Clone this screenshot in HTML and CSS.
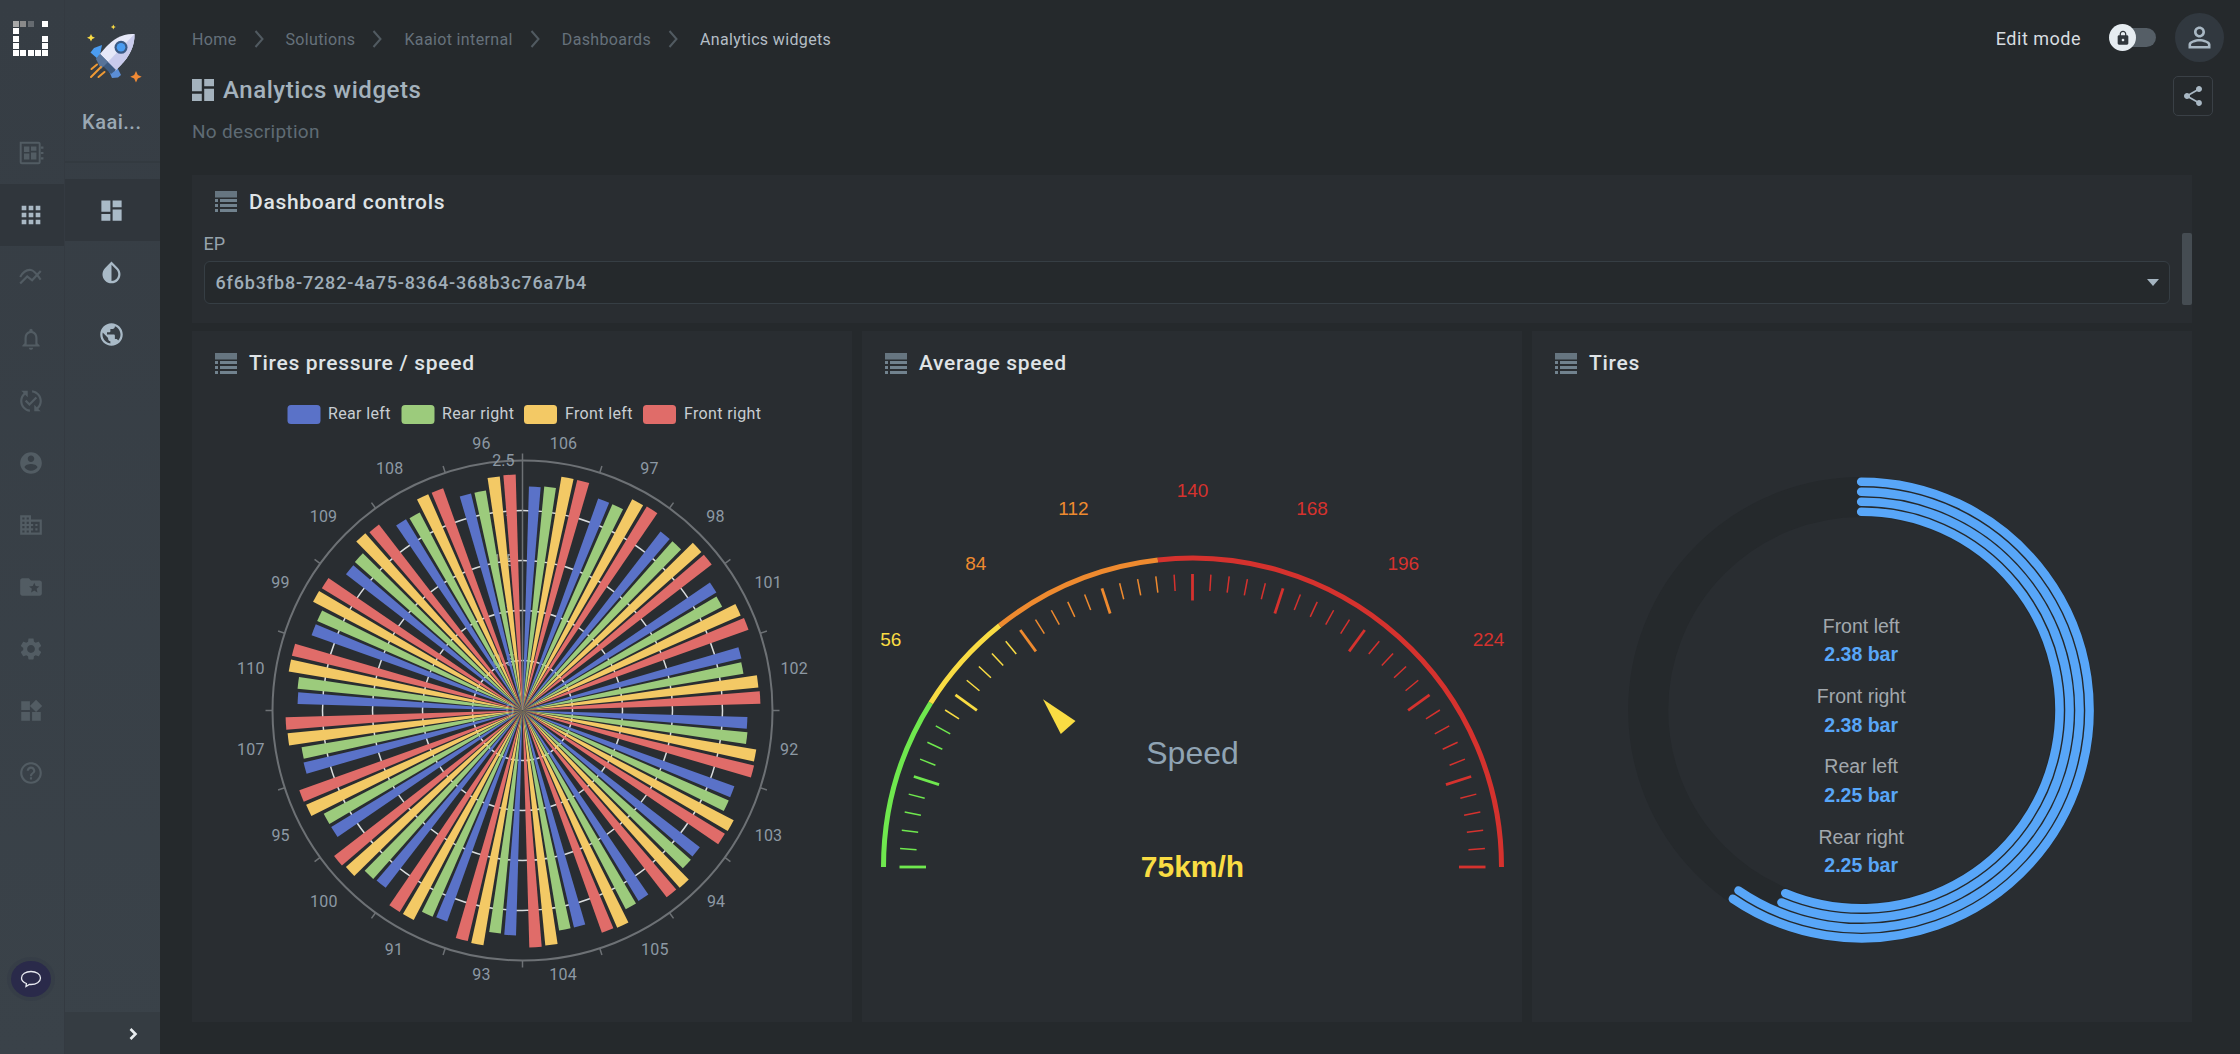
FILE: index.html
```html
<!DOCTYPE html>
<html lang="en">
<head>
<meta charset="utf-8">
<title>Analytics widgets</title>
<link rel="stylesheet" href="styles.css">
</head>
<body>
<div class="app">
  <nav class="rail">
    <div class="logo">
      <div class="logo-grid">
        <i class="g1"></i><i class="g2"></i><i class="g3"></i><b></b><i></i>
        <i></i><b></b><b></b><b></b><b></b>
        <i></i><b></b><b></b><b></b><i></i>
        <i></i><b></b><b></b><b></b><i></i>
        <i></i><i></i><i></i><i></i><i></i>
      </div>
    </div>
    <a class="rail-item"><svg class="ic" viewBox="0 0 24 24"><path fill="none" stroke="currentColor" stroke-width="1.8" d="M2.5 2.5h16.5a1 1 0 0 1 1 1v17a1 1 0 0 1-1 1H3.500a1 1 0 0 1-1-1z"/><path d="M5.500 6h5v5h-5zM12 6h5v4h-5zM12 11.500h5V18h-5zM5.500 12.500h5V18h-5zM21 6h2.500v2H21zM21 11h2.500v2H21zM21 16h2.500v2H21z"/></svg></a>
    <a class="rail-item active"><svg class="ic" viewBox="0 0 24 24"><path d="M4 8h4V4H4v4zm6 12h4v-4h-4v4zm-6 0h4v-4H4v4zm0-6h4v-4H4v4zm6 0h4v-4h-4v4zm6-10v4h4V4h-4zm-6 4h4V4h-4v4zm6 6h4v-4h-4v4zm0 6h4v-4h-4v4z"/></svg></a>
    <a class="rail-item"><svg class="ic" viewBox="0 0 24 24"><path fill="none" stroke="currentColor" stroke-width="2" d="M2 18l6.500-6.500 4.500 3.500 8-8.500M2 12c2.500-4.500 6.500-7 10-6.500 3.500.5 6 5 9 9"/></svg></a>
    <a class="rail-item"><svg class="ic" viewBox="0 0 24 24"><path d="M12 22c1.100 0 2-.9 2-2h-4c0 1.100.9 2 2 2zm6-6v-5c0-3.070-1.630-5.640-4.500-6.320V4c0-.83-.67-1.500-1.500-1.500s-1.500.67-1.500 1.500v.68C7.640 5.360 6 7.920 6 11v5l-2 2v1h16v-1l-2-2zm-2 1H8v-6c0-2.480 1.510-4.500 4-4.500s4 2.020 4 4.500v6z"/></svg></a>
    <a class="rail-item"><svg class="ic" viewBox="0 0 24 24"><path d="M17.660 9.530l-7.070 7.070-4.240-4.240 1.410-1.410 2.830 2.830 5.660-5.660zM4 12c0-2.330 1.020-4.420 2.620-5.880L9 8.500v-6H3l2.200 2.200C3.240 6.520 2 9.110 2 12c0 5.190 3.950 9.450 9 9.950v-2.020C7.060 19.440 4 16.070 4 12zm18 0c0-5.190-3.950-9.450-9-9.950v2.020c3.940.49 7 3.860 7 7.930 0 2.330-1.020 4.420-2.620 5.880L15 15.500v6h6l-2.200-2.200C20.760 17.480 22 14.890 22 12z"/></svg></a>
    <a class="rail-item"><svg class="ic" viewBox="0 0 24 24"><path d="M12 2C6.480 2 2 6.480 2 12s4.480 10 10 10 10-4.480 10-10S17.520 2 12 2zm0 3c1.660 0 3 1.340 3 3s-1.340 3-3 3-3-1.340-3-3 1.340-3 3-3zm0 14.200c-2.500 0-4.710-1.280-6-3.220.03-1.990 4-3.080 6-3.080 1.990 0 5.970 1.090 6 3.080-1.290 1.940-3.500 3.220-6 3.220z"/></svg></a>
    <a class="rail-item"><svg class="ic" viewBox="0 0 24 24"><path d="M12 7V3H2v18h20V7H12zM6 19H4v-2h2v2zm0-4H4v-2h2v2zm0-4H4V9h2v2zm0-4H4V5h2v2zm4 12H8v-2h2v2zm0-4H8v-2h2v2zm0-4H8V9h2v2zm0-4H8V5h2v2zm10 12h-8v-2h2v-2h-2v-2h2v-2h-2V9h8v10zm-2-8h-2v2h2v-2zm0 4h-2v2h2v-2z"/></svg></a>
    <a class="rail-item"><svg class="ic" viewBox="0 0 24 24"><path d="M20 6h-8l-2-2H4c-1.100 0-1.990.9-1.990 2L2 18c0 1.100.9 2 2 2h16c1.100 0 2-.9 2-2V8c0-1.100-.9-2-2-2zm-2.060 11L15 15.280 12.060 17l.78-3.330-2.590-2.240 3.410-.29L15 8l1.340 3.140 3.410.29-2.590 2.240.78 3.330z"/></svg></a>
    <a class="rail-item"><svg class="ic" viewBox="0 0 24 24"><path d="M19.140 12.940c.04-.3.060-.61.060-.94 0-.32-.02-.64-.07-.94l2.030-1.580c.18-.14.23-.41.12-.61l-1.920-3.320c-.12-.22-.37-.29-.59-.22l-2.390.96c-.5-.38-1.030-.7-1.620-.94l-.36-2.540c-.04-.24-.24-.41-.48-.41h-3.840c-.24 0-.43.17-.47.41l-.36 2.540c-.59.24-1.130.57-1.620.94l-2.390-.96c-.22-.08-.47 0-.59.22L2.740 8.870c-.12.21-.08.47.12.61l2.030 1.580c-.05.3-.09.63-.09.94s.02.64.07.94l-2.030 1.580c-.18.14-.23.41-.12.61l1.920 3.320c.12.22.37.29.59.22l2.390-.96c.5.38 1.030.7 1.620.94l.36 2.540c.05.24.24.41.48.41h3.840c.24 0 .44-.17.47-.41l.36-2.540c.59-.24 1.130-.56 1.620-.94l2.390.96c.22.08.47 0 .59-.22l1.920-3.320c.12-.22.07-.47-.12-.61l-2.010-1.580zM12 15.600c-1.980 0-3.600-1.620-3.600-3.600s1.620-3.600 3.600-3.600 3.600 1.620 3.600 3.600-1.620 3.600-3.600 3.600z"/></svg></a>
    <a class="rail-item"><svg class="ic" viewBox="0 0 24 24"><path d="M13 13v8h8v-8h-8zM3 21h8v-8H3v8zM3 3v8h8V3H3zm13.660-1.310L11 7.340 16.660 13l5.660-5.660-5.660-5.650z"/></svg></a>
    <a class="rail-item"><svg class="ic" viewBox="0 0 24 24"><path d="M11 18h2v-2h-2v2zm1-16C6.480 2 2 6.480 2 12s4.480 10 10 10 10-4.480 10-10S17.520 2 12 2zm0 18c-4.410 0-8-3.590-8-8s3.590-8 8-8 8 3.590 8 8-3.590 8-8 8zm0-14c-2.210 0-4 1.790-4 4h2c0-1.100.9-2 2-2s2 .9 2 2c0 2-3 1.750-3 5h2c0-2.250 3-2.500 3-5 0-2.210-1.790-4-4-4z"/></svg></a>
    <button class="chat"><svg viewBox="0 0 24 24"><path fill="none" stroke="currentColor" stroke-width="1.300" d="M12 4.500c5.200 0 9.500 2.700 9.500 6.500s-4.300 6.500-9.500 6.500c-.6 0-1.200 0-1.700-.1L7 19.500l.4-3C4.400 15.400 2.500 13.400 2.500 11c0-3.800 4.300-6.500 9.500-6.500z"/></svg></button>
  </nav>

  <aside class="side">
    <div class="side-head">
      <svg class="rocket" viewBox="0 0 80 75">
        <path fill="#4b9cf0" d="M31 30l-8 3-3.500 4.500L28 45z"/>
        <path fill="#5b8ed6" d="M46 52l4 8-3 2.500-6 .5-3.500-8z"/>
        <path fill="#e6e8f8" d="M63.500 19C52 18 42 24 35 32l-7 8 16 16 6-6c8-8 14-19 13.500-31z"/>
        <path fill="#c9cbec" d="M63.500 19L36 48l8 8 6-6c8-8 14-19 13.500-31z"/>
        <path fill="#3d5a80" d="M29 39l16 16-5 4-15-15z"/>
        <path fill="#577399" d="M29 39l8 8-7 7-5-10z"/>
        <circle cx="50" cy="32.300" r="6.500" fill="#3a5a85"/>
        <circle cx="50" cy="32.300" r="4.300" fill="#4b9cf0"/>
        <path fill="none" stroke="#ef9a35" stroke-width="2" stroke-linecap="round" d="M20.500 54l5.500-4.500M20 62l10-10M27.500 62l6-5"/>
        <path fill="#fbdc45" d="M20 19l1.200 2.500L24 22.700l-2.800 1.200L20 26.500l-1.200-2.600-2.800-1.200 2.800-1.200zM42.300 9.500l.8 1.700 1.700.8-1.700.8-.8 1.700-.8-1.700-1.700-.8 1.700-.8z"/>
        <path fill="#f08a35" d="M65 56l1.800 3.900 3.900 1.800-3.900 1.800L65 67.500l-1.800-4-3.900-1.800 3.900-1.800z"/>
      </svg>
      <div class="side-name">Kaai...</div>
    </div>
    <a class="side-item active"><svg class="ic" viewBox="0 0 24 24"><path d="M3 13h8V3H3v10zm0 8h8v-6H3v6zm10 0h8V11h-8v10zm0-18v6h8V3h-8z"/></svg></a>
    <a class="side-item"><svg class="ic flip" viewBox="0 0 24 24"><path d="M17.660 7.930L12 2.270 6.340 7.930c-3.120 3.120-3.120 8.190 0 11.310C7.900 20.800 9.950 21.580 12 21.580c2.050 0 4.100-.78 5.660-2.340 3.120-3.120 3.120-8.190 0-11.310zM12 19.590c-1.600 0-3.110-.62-4.240-1.760C6.620 16.690 6 15.190 6 13.590s.62-3.110 1.760-4.240L12 5.100v14.490z"/></svg></a>
    <a class="side-item"><svg class="ic" viewBox="0 0 24 24"><path d="M12 2C6.480 2 2 6.480 2 12s4.480 10 10 10 10-4.480 10-10S17.520 2 12 2zm-1 17.930c-3.950-.49-7-3.850-7-7.930 0-.62.08-1.210.21-1.790L9 15v1c0 1.100.9 2 2 2v1.930zm6.900-2.540c-.26-.81-1-1.390-1.900-1.390h-1v-3c0-.55-.45-1-1-1H8v-2h2c.55 0 1-.45 1-1V7h2c1.100 0 2-.9 2-2v-.41c2.930 1.190 5 4.060 5 7.410 0 2.080-.8 3.970-2.100 5.390z"/></svg></a>
    <div class="side-foot"><svg viewBox="0 0 10 14"><path fill="none" stroke="currentColor" stroke-width="2.600" d="M2.500 2l5 5-5 5"/></svg></div>
  </aside>

  <main class="main">
    <header class="topbar">
      <ol class="crumbs">
        <li>Home</li><li class="sep"><svg viewBox="0 0 10 20"><path d="M1.500 2l7 8-7 8"/></svg></li>
        <li>Solutions</li><li class="sep"><svg viewBox="0 0 10 20"><path d="M1.500 2l7 8-7 8"/></svg></li>
        <li>Kaaiot internal</li><li class="sep"><svg viewBox="0 0 10 20"><path d="M1.500 2l7 8-7 8"/></svg></li>
        <li>Dashboards</li><li class="sep"><svg viewBox="0 0 10 20"><path d="M1.500 2l7 8-7 8"/></svg></li>
        <li class="current">Analytics widgets</li>
      </ol>
      <div class="top-right">
        <span class="edit-label">Edit mode</span>
        <span class="toggle"><span class="knob"><svg viewBox="0 0 24 24"><path d="M18 8h-1V6c0-2.760-2.240-5-5-5S7 3.240 7 6v2H6c-1.100 0-2 .9-2 2v10c0 1.100.9 2 2 2h12c1.100 0 2-.9 2-2V10c0-1.100-.9-2-2-2zm-6 9c-1.100 0-2-.9-2-2s.9-2 2-2 2 .9 2 2-.9 2-2 2zm3.100-9H8.900V6c0-1.710 1.390-3.100 3.100-3.100 1.710 0 3.100 1.390 3.100 3.100v2z"/></svg></span></span>
        <span class="avatar"><svg viewBox="0 0 24 24"><path d="M12 5.900c1.160 0 2.100.94 2.100 2.100s-.94 2.100-2.100 2.100S9.900 9.160 9.900 8s.94-2.100 2.100-2.100m0 9c2.970 0 6.100 1.460 6.100 2.100v1.100H5.900V17c0-.64 3.130-2.100 6.100-2.100M12 4C9.790 4 8 5.790 8 8s1.790 4 4 4 4-1.790 4-4-1.790-4-4-4zm0 9c-2.670 0-8 1.340-8 4v3h16v-3c0-2.660-5.330-4-8-4z"/></svg></span>
      </div>
    </header>
    <section class="page-head">
      <div class="page-left">
        <h1 class="title"><svg class="ic" viewBox="3 3 18 18"><path d="M3 13h8V3H3v10zm0 8h8v-6H3v6zm10 0h8V11h-8v10zm0-18v6h8V3h-8z"/></svg>Analytics widgets</h1>
        <p class="desc">No description</p>
      </div>
      <button class="share"><svg viewBox="0 0 24 24"><path d="M18 16.080c-.76 0-1.440.3-1.960.77L8.910 12.700c.05-.23.09-.46.09-.7s-.04-.47-.09-.7l7.050-4.110c.54.5 1.250.81 2.040.81 1.660 0 3-1.340 3-3s-1.340-3-3-3-3 1.340-3 3c0 .24.04.47.09.7L8.040 9.810C7.500 9.310 6.790 9 6 9c-1.660 0-3 1.340-3 3s1.340 3 3 3c.79 0 1.500-.31 2.040-.81l7.120 4.160c-.05.21-.08.43-.08.65 0 1.610 1.310 2.920 2.920 2.920 1.610 0 2.920-1.310 2.920-2.920s-1.310-2.920-2.920-2.920z"/></svg></button>
    </section>

    <section class="card controls">
      <div class="card-head"><svg class="tbl" viewBox="0 0 22 21"><use href="#tbl"/></svg><h2>Dashboard controls</h2></div>
      <label class="field-label">EP</label>
      <div class="select"><span>6f6b3fb8-7282-4a75-8364-368b3c76a7b4</span><i class="caret"></i></div>
      <i class="scroll-thumb"></i>
    </section>

    <section class="widgets">
      <article class="card widget">
        <div class="card-head"><svg class="tbl" viewBox="0 0 22 21"><use href="#tbl"/></svg><h2>Tires pressure / speed</h2></div>
        <svg class="chart" id="polar" viewBox="0 0 660 627">
          <g class="legend">
            <rect x="95.500" y="10" width="33" height="19" rx="3.500" fill="#5a72c8"/><text x="136" y="24">Rear left</text>
            <rect x="209.500" y="10" width="33" height="19" rx="3.500" fill="#9ccb7c"/><text x="250" y="24">Rear right</text>
            <rect x="332" y="10" width="33" height="19" rx="3.500" fill="#f3c965"/><text x="373" y="24">Front left</text>
            <rect x="451" y="10" width="33" height="19" rx="3.500" fill="#e06c69"/><text x="492" y="24">Front right</text>
          </g>
          <g id="polar-axis"></g>
          <g id="polar-bars"></g>
        </svg>
      </article>
      <article class="card widget">
        <div class="card-head"><svg class="tbl" viewBox="0 0 22 21"><use href="#tbl"/></svg><h2>Average speed</h2></div>
        <svg class="chart" id="gauge" viewBox="0 0 660 627">
          <g id="gauge-parts"></g>
          <path class="needle" d="M181 304.300L213.500 326 198.800 339z"/>
          <text class="gauge-name" x="330.500" y="369">Speed</text>
          <text class="gauge-value" x="330.500" y="471">75km/h</text>
        </svg>
      </article>
      <article class="card widget">
        <div class="card-head"><svg class="tbl" viewBox="0 0 22 21"><use href="#tbl"/></svg><h2>Tires</h2></div>
        <svg class="chart" id="radial" viewBox="0 0 660 627">
          <circle class="track" cx="329.200" cy="315" r="213"/>
          <g id="radial-arcs"></g>
          <g class="radial-text">
            <text class="rl" x="329.200" y="231">Front left</text><text class="rv" x="329.200" y="259">2.38 bar</text>
            <text class="rl" x="329.200" y="301.300">Front right</text><text class="rv" x="329.200" y="329.700">2.38 bar</text>
            <text class="rl" x="329.200" y="371.300">Rear left</text><text class="rv" x="329.200" y="399.700">2.25 bar</text>
            <text class="rl" x="329.200" y="442">Rear right</text><text class="rv" x="329.200" y="469.700">2.25 bar</text>
          </g>
        </svg>
      </article>
    </section>
  </main>
</div>
<svg class="defs" width="0" height="0"><defs><g id="tbl"><path d="M0 0h22v6.500H0z" opacity=".85"/><path d="M0 8h3v3H0zM5 8h17v3H5zM0 13h3v3H0zM5 13h17v3H5zM0 18h3v3H0zM5 18h17v3H5z"/></g></defs></svg>
<script src="charts.js"></script>
</body>
</html>
```

FILE: styles.css
```css
* { box-sizing: border-box; }
html, body { margin: 0; height: 100%; overflow: hidden; background: #25292c; }
body { font-family: Roboto, "Noto Sans", sans-serif; color: #c8ced3; }
.app { display: flex; width: 2240px; height: 1054px; }

.ic { width: 26px; height: 26px; fill: currentColor; display: block; }
.flip { transform: scaleX(-1); }

/* first rail */
.rail { width: 64px; flex: none; background: linear-gradient(#363d44, #3a4249); display: flex; flex-direction: column; color: #525c63; }
.logo { height: 122px; padding: 21px 0 0 13px; }
.logo-grid { display: grid; grid-template-columns: repeat(5, 6px); grid-auto-rows: 6px; gap: 1.300px; }
.logo-grid i { background: #fff; }
.logo-grid .g1 { background: #a8a8a8; }
.logo-grid .g2 { background: #8a8a8a; }
.logo-grid .g3 { background: #666b70; }
.rail-item { height: 62px; display: flex; align-items: center; justify-content: center; padding-right: 2px; }
.rail-item.active { background: #30363c; color: #a9b8c4; }
.rail-item.active .ic { width: 28px; height: 28px; }
.chat { margin: auto 0 57px 11px; width: 40px; height: 36px; border: 0; border-radius: 50%; background: #2a2a4a; color: #e8eaf0; padding: 6px 8px; box-shadow: 0 0 0 4px rgba(50,54,70,.35); }
.chat svg { display: block; width: 24px; height: 24px; }

/* second rail */
.side { width: 96px; flex: none; background: linear-gradient(#363d44, #3a4249); border-left: 1px solid #343a41; display: flex; flex-direction: column; color: #a9bac7; }
.side-head { height: 163px; border-bottom: 2px solid #333a40; padding: 15px 0 0 6px; margin-bottom: 16px; }
.rocket { display: block; width: 80px; height: 75px; }
.side-name { margin: 20px 0 0 11px; font-size: 20px; line-height: 24px; font-weight: 500; letter-spacing: .5px; color: #9aa8b3; }
.side-item { height: 62px; display: flex; align-items: center; justify-content: center; padding-right: 2px; }
.side-item .ic { width: 27px; height: 27px; }
.side-item.active { background: #30363c; }
.side-foot { margin-top: auto; height: 42px; background: #353c42; display: flex; align-items: center; justify-content: flex-end; padding: 0 22px 0 0; color: #e8ecef; }
.side-foot svg { width: 10px; height: 14px; margin-top: 1px; }

/* main */
.main { flex: 1; min-width: 0; padding: 0 48px 0 32px; display: flex; flex-direction: column; }
.topbar { height: 65px; display: flex; justify-content: space-between; align-items: flex-start; padding-top: 13px; margin-right: -48px; }
.crumbs { list-style: none; margin: 12px 0 0; padding: 0; display: flex; align-items: center; height: 28px; font-size: 16px; letter-spacing: .36px; color: #66717b; }
.crumbs .sep { width: 14px; height: 20px; margin: 0 18px 0 17px; }
.crumbs .sep svg { display: block; width: 10px; height: 20px; fill: none; stroke: #515a61; stroke-width: 2; }
.crumbs .current { color: #b4bec6; }
.top-right { display: flex; align-items: center; padding-right: 16px; }
.edit-label { font-size: 18px; line-height: 28px; color: #d8dde0; margin: 2px 28px 0 0; letter-spacing: .5px; }
.toggle { width: 47px; height: 19px; border-radius: 10px; background: #555e66; margin-right: 19px; position: relative; background-clip: content-box; padding-left: 14px; }
.knob { position: absolute; left: 0; top: -4px; width: 27px; height: 27px; border-radius: 50%; background: #e6ecf1; padding: 5.500px; color: #30363c; }
.knob svg { display: block; width: 16px; height: 16px; fill: currentColor; }
.avatar { width: 49px; height: 49px; border-radius: 50%; background: #31383f; padding: 8px; color: #a9b8c4; }
.avatar svg { display: block; width: 33px; height: 33px; fill: currentColor; }

.page-head { height: 110px; display: flex; justify-content: space-between; margin-right: -21px; }
.title { margin: 10px 0 0; display: flex; align-items: center; height: 30px; font-size: 24px; line-height: 30px; font-weight: 500; letter-spacing: .55px; color: #a4b2bd; }
.title .ic { width: 22px; height: 22px; margin-right: 9px; }
.desc { margin: 15px 0 0; font-size: 19px; line-height: 24px; letter-spacing: .3px; color: #5f6b74; }
.share { width: 40px; height: 40px; margin-top: 10.500px; padding: 6.500px; border: 1.500px solid #3a4046; border-radius: 5px; background: transparent; color: #a9b8c4; }
.share svg { display: block; width: 24px; height: 24px; fill: currentColor; }

.card { background: #292d31; position: relative; }
.card-head { display: flex; align-items: center; height: 64px; padding: 0 0 0 23px; }
.card-head h2 { margin: 0 0 0 12px; font-size: 21px; line-height: 28px; font-weight: 500; letter-spacing: .7px; color: #dfe3e6; }
.tbl { width: 22px; height: 21px; fill: #71828e; flex: none; }

.controls { height: 148px; margin-bottom: 8px; padding: 0 22.500px 0 11.500px; overflow: hidden; }
.controls .card-head { height: 53px; padding-left: 11.500px; margin-bottom: 4px; }
.field-label { display: block; font-size: 18px; line-height: 24px; color: #97a3ac; margin-top: 3px; }
.select { margin-top: 5px; height: 43px; border: 1px solid #363e44; border-radius: 6px; background: #25292c; display: flex; align-items: center; justify-content: space-between; padding: 0 9.500px 0 11px; font-size: 18px; letter-spacing: .83px; color: #9fadb8; font-weight: 500; }
.caret { width: 0; height: 0; border-left: 6.500px solid transparent; border-right: 6.500px solid transparent; border-top: 7px solid #a4b4c0; }
.scroll-thumb { position: absolute; right: 0; top: 58px; width: 10.500px; height: 72px; background: #454c52; border-radius: 2px; }

.widgets { display: grid; grid-template-columns: repeat(3, 660px); gap: 10px; }
.widget { height: 691px; }
.chart { display: block; width: 660px; height: 627px; overflow: visible; }

.legend text { font-size: 16px; fill: #c8ced3; letter-spacing: .35px; }
.ax-label { font-size: 16px; fill: #8d99a4; text-anchor: middle; dominant-baseline: central; letter-spacing: .2px; }
.ax-val { font-size: 16px; fill: #8d99a4; text-anchor: end; dominant-baseline: central; }

.needle { fill: #f9dc43; }
.gauge-name { font-family: "Liberation Sans", Arial, sans-serif; font-size: 32px; fill: #8fa3b3; text-anchor: middle; }
.gauge-value { font-family: "Liberation Sans", Arial, sans-serif; font-size: 30px; font-weight: 700; fill: #f9dc43; text-anchor: middle; dominant-baseline: central; }
.gauge-tick-label { font-family: "Liberation Sans", Arial, sans-serif; font-size: 19px; text-anchor: middle; dominant-baseline: central; }

.track { fill: none; stroke: #25292c; stroke-width: 40; }
.radial-text text { font-family: "Liberation Sans", Arial, sans-serif; font-size: 19.500px; text-anchor: middle; dominant-baseline: central; }
.rl { fill: #a2a8ad; }
.rv { fill: #58a6f8; font-weight: 700; }
.defs { position: absolute; }
```

FILE: charts.js
```js
var NS = "http://www.w3.org/2000/svg";
function el(parent, name, attrs, text) {
  var n = document.createElementNS(NS, name);
  for (var k in attrs) n.setAttribute(k, attrs[k]);
  if (text !== undefined) n.textContent = text;
  parent.appendChild(n);
  return n;
}
function pt(cx, cy, r, deg) {
  var a = deg * Math.PI / 180;
  return [cx + r * Math.sin(a), cy - r * Math.cos(a)];
}
function f(v) { return v.toFixed(2); }

/* Polar bar chart */
(function () {
  var cx = 330.5, cy = 315.5, R = 250;
  var axis = document.getElementById("polar-axis");
  var bars = document.getElementById("polar-bars");
  var line = "#6d7175";
  [50, 100, 150, 200].forEach(function (r) {
    el(axis, "circle", { cx: cx, cy: cy, r: r, fill: "none", stroke: "#d9dcde", "stroke-width": 1.5 });
  });
  el(axis, "circle", { cx: cx, cy: cy, r: R, fill: "none", stroke: line, "stroke-width": 2 });
  /* category label with its offset from the chart centre, clockwise from the top */
  var labels = [
    [106, 41, -267], [97, 127, -241.7], [98, 193, -194], [101, 245.7, -128], [102, 271.7, -42],
    [92, 266.7, 39.3], [103, 246, 125], [94, 193.6, 191], [105, 132.4, 238.7], [104, 40.6, 263.7],
    [93, -41, 263.7], [91, -128.6, 238.7], [100, -198.6, 191], [95, -241.9, 125], [107, -271.7, 39.3],
    [110, -271.7, -42.3], [99, -242, -128], [109, -199, -194], [108, -132.8, -241.7], [96, -41, -266.7]
  ];
  labels.forEach(function (l, i) {
    var a = i * 18, p1 = pt(cx, cy, R, a), p2 = pt(cx, cy, R + 7, a);
    el(axis, "line", { x1: f(p1[0]), y1: f(p1[1]), x2: f(p2[0]), y2: f(p2[1]), stroke: line, "stroke-width": 1.5 });
    el(axis, "text", { "class": "ax-label", x: f(cx + l[1]), y: f(cy + l[2]) }, l[0]);
  });
  el(axis, "line", { x1: cx, y1: cy, x2: cx, y2: cy - R, stroke: line, "stroke-width": 1.5 });
  ["0", "0.5", "1", "1.5", "2", "2.5"].forEach(function (v, i) {
    el(axis, "text", { "class": "ax-val", x: cx - 8, y: cy - i * 50 }, v);
  });
  var colors = ["#5a72c8", "#9ccb7c", "#f3c965", "#e06c69"];
  var radii = [
    [224,225,237,237],[225,225,238,239],[226,226,239,239],[227,225,238,240],[225,224,237,238],
    [225,226,237,238],[225,225,238,237],[224,225,237,236],[223,224,237,236],[223,223,236,237],
    [225,224,238,237],[224,225,236,236],[224,225,236,238],[224,224,236,237],[225,224,236,237],
    [225,226,237,237],[224,224,236,235],[223,224,237,235],[224,223,236,236],[223,223,235,236]
  ];
  radii.forEach(function (row, s) {
    row.forEach(function (r, b) {
      var a0 = s * 18 + 1.65 + b * 3.9, a1 = a0 + 3;
      var p0 = pt(cx, cy, r, a0), p1 = pt(cx, cy, r, a1);
      el(bars, "path", {
        d: "M" + cx + " " + cy + "L" + f(p0[0]) + " " + f(p0[1]) + "A" + r + " " + r + " 0 0 1 " + f(p1[0]) + " " + f(p1[1]) + "Z",
        fill: colors[b]
      });
    });
  });
})();

/* Speed gauge */
(function () {
  var cx = 330.5, cy = 472, R = 309;
  var g = document.getElementById("gauge-parts");
  var GREEN = "#6fe84e", YELLOW = "#f9dc43", ORANGE = "#ee8a2f", RED = "#d5322e";
  function colorAt(a) { return a < 32.1 ? GREEN : a < 51.4 ? YELLOW : a < 83.57 ? ORANGE : RED; }
  [[0, 32.1, GREEN], [32.1, 51.4, YELLOW], [51.4, 83.57, ORANGE], [83.57, 180, RED]].forEach(function (s) {
    var p0 = pt(cx, cy, R, s[0] - 90), p1 = pt(cx, cy, R, s[1] - 90);
    el(g, "path", {
      d: "M" + f(p0[0]) + " " + f(p0[1]) + "A" + R + " " + R + " 0 0 1 " + f(p1[0]) + " " + f(p1[1]),
      fill: "none", stroke: s[2], "stroke-width": 5
    });
  });
  for (var i = 0; i <= 50; i++) {
    var a = i * 3.6, major = i % 5 === 0;
    var a2 = a - 90;
    var p0 = pt(cx, cy, 293, a2), p1 = pt(cx, cy, major ? 266.5 : 276.5, a2);
    el(g, "line", {
      x1: f(p0[0]), y1: f(p0[1]), x2: f(p1[0]), y2: f(p1[1]),
      stroke: colorAt(a), "stroke-width": major ? 2.8 : 1.5
    });
  }
  /* value, angle, offset of the label from the gauge centre */
  [[56, 36, -301.8, -227.7], [84, 54, -216.8, -303.7], [112, 72, -119, -358.7], [140, 90, 0, -377],
   [168, 108, 119.5, -358.7], [196, 126, 210.8, -303.7], [224, 144, 296, -227.7]].forEach(function (l) {
    el(g, "text", { "class": "gauge-tick-label", x: f(cx + l[2]), y: f(cy + l[3]), fill: colorAt(l[1]) }, l[0]);
  });
})();

/* Radial bars */
(function () {
  var cx = 329.2, cy = 315;
  var g = document.getElementById("radial-arcs");
  [[228.3, 214.2], [218.3, 214.2], [208.3, 202.5], [198.3, 202.5]].forEach(function (s) {
    var r = s[0], p = pt(cx, cy, r, s[1]);
    el(g, "path", {
      d: "M" + cx + " " + f(cy - r) + "A" + r + " " + r + " 0 1 1 " + f(p[0]) + " " + f(p[1]),
      fill: "none", stroke: "#58a6f8", "stroke-width": 8.6, "stroke-linecap": "round"
    });
  });
})();
```
